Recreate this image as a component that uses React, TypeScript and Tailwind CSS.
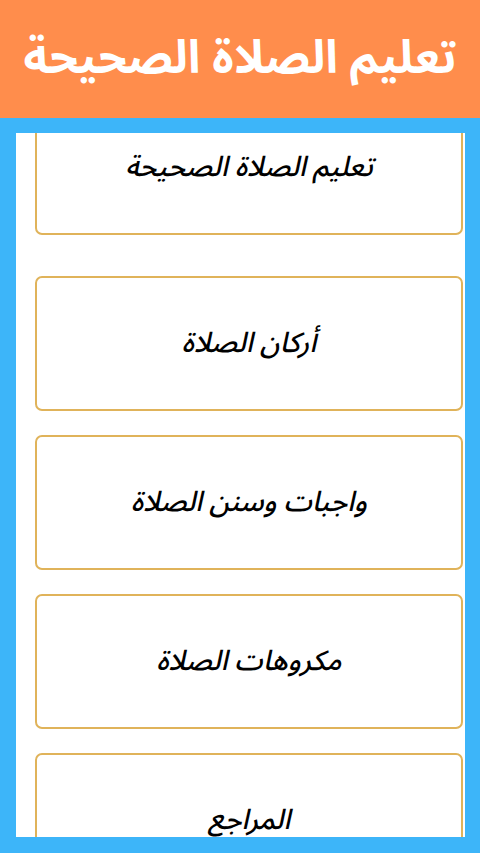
import React from "react";

const items = [
  "تعليم الصلاة الصحيحة",
  "أركان الصلاة",
  "واجبات وسنن الصلاة",
  "مكروهات الصلاة",
  "المراجع",
];

const arabic = '"Noto Sans Arabic UI", "Noto Sans Arabic", "DejaVu Sans", sans-serif';

export default function App() {
  return (
    <div className="w-[480px] h-[853px] flex flex-col bg-[#3db5f9] overflow-hidden">
      <div className="h-[118px] shrink-0 bg-[#ff8d4c] flex items-center justify-center">
        <h1
          dir="rtl"
          className="text-white text-[46px] font-bold leading-none pb-[8px]"
          style={{ fontFamily: arabic }}
        >
          تعليم الصلاة الصحيحة
        </h1>
      </div>
      <div className="flex-1 min-h-0 pt-[15px] pb-[16px] pl-[16px] pr-[15px] flex">
        <div className="flex-1 min-h-0 bg-white overflow-hidden">
          <div className="-mt-[33px] flex flex-col gap-[24px] pl-[19px] pr-[2px]">
            {items.map((t, i) => (
              <div
                key={t}
                className={
                  "h-[135px] shrink-0 border-2 border-[#e0b35a] rounded-[7px] bg-white flex items-center justify-center" +
                  (i === 0 ? " mb-[17px]" : "")
                }
              >
                <span
                  dir="rtl"
                  className="text-black text-[28px] font-medium italic leading-none pb-[6px]"
                  style={{ fontFamily: arabic }}
                >
                  {t}
                </span>
              </div>
            ))}
          </div>
        </div>
      </div>
    </div>
  );
}
